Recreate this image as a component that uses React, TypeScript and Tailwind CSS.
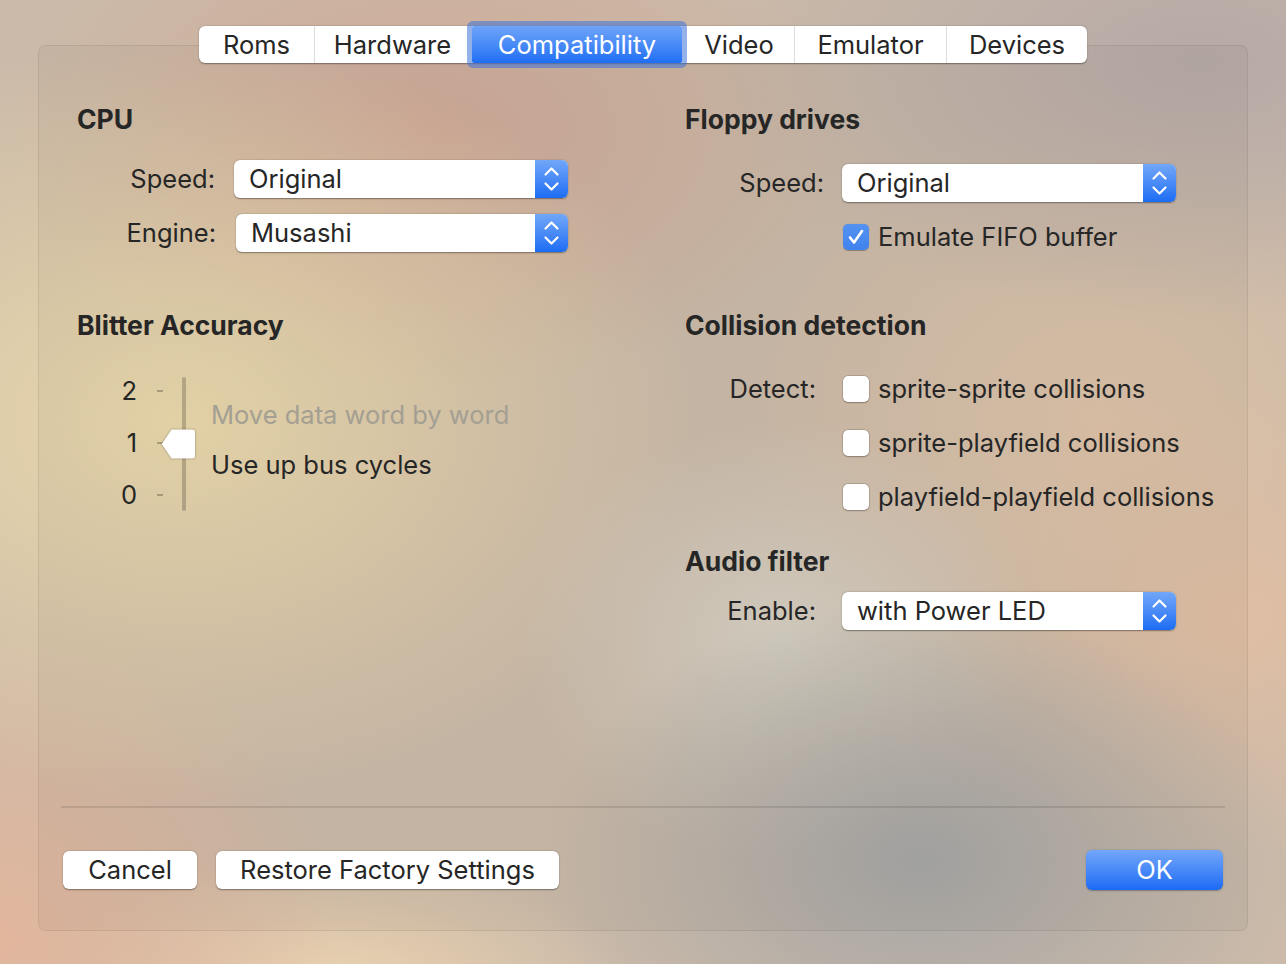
import React from "react";

interface Tab {
  label: string;
  width: string;
  selected?: boolean;
}

const tabs: Tab[] = [
  { label: "Roms", width: "w-[115px]" },
  { label: "Hardware", width: "w-[156px]" },
  { label: "Compatibility", width: "w-[210px]", selected: true },
  { label: "Video", width: "w-[110px]" },
  { label: "Emulator", width: "w-[152px]" },
  { label: "Devices", width: "w-[141px]" },
];

const UpDown = () => (
  <svg width="33" height="38" viewBox="0 0 33 38" fill="none">
    <path d="M10.5 14.5 L16.5 8.5 L22.5 14.5" stroke="white" strokeWidth="2.2" strokeLinecap="round" strokeLinejoin="round" />
    <path d="M10.5 23.5 L16.5 29.5 L22.5 23.5" stroke="white" strokeWidth="2.2" strokeLinecap="round" strokeLinejoin="round" />
  </svg>
);

const PopUp = ({ value, width }: { value: string; width: string }) => (
  <div className={`flex h-[38px] ${width} rounded-[6px] bg-white shadow-[0_0.5px_1.5px_rgba(0,0,0,0.4)]`}>
    <span className="flex-1 pl-[15px] leading-[38px]">{value}</span>
    <span className="flex w-[33px] items-center justify-center rounded-r-[6px] bg-gradient-to-b from-[#72a7f8] to-[#1a6cf4]">
      <UpDown />
    </span>
  </div>
);

const CheckBox = ({ checked, label }: { checked?: boolean; label: string }) => (
  <div className="flex h-[30px] items-center gap-[9px]">
    {checked ? (
      <span className="flex h-[26px] w-[26px] items-center justify-center rounded-[5px] bg-gradient-to-b from-[#5593f2] to-[#3f82ee] shadow-[0_0.5px_1px_rgba(0,0,0,0.3)]">
        <svg width="26" height="26" viewBox="0 0 26 26" fill="none">
          <path d="M7 13.5 L11 18.5 L19 7" stroke="white" strokeWidth="2.6" strokeLinecap="round" strokeLinejoin="round" />
        </svg>
      </span>
    ) : (
      <span className="h-[26px] w-[26px] rounded-[5px] bg-white shadow-[0_0_0_0.5px_rgba(0,0,0,0.2),0_0.5px_1.5px_rgba(0,0,0,0.25)]" />
    )}
    <span>{label}</span>
  </div>
);

const Heading = ({ children, className = "" }: { children: React.ReactNode; className?: string }) => (
  <h2 className={`h-[30px] text-[26.5px] leading-[30px] font-bold ${className}`}>{children}</h2>
);

const Button = ({ label, width }: { label: string; width: string }) => (
  <button className={`h-[38px] ${width} rounded-[6px] bg-white text-[#262626] shadow-[0_0.5px_1.5px_rgba(0,0,0,0.4)]`}>
    {label}
  </button>
);

// vertical three-step slider for blitter accuracy
const BlitterSlider = () => (
  <div className="mt-[37px] flex h-[134px]">
    <div className="flex w-[86px] flex-col gap-[26px] pt-[1px]">
      {["2", "1", "0"].map((n) => (
        <div key={n} className="flex h-[26px] items-center">
          <span className="w-[60px] text-right">{n}</span>
          <span className="ml-[20px] h-[1.5px] w-[6px] bg-black/25" />
        </div>
      ))}
    </div>
    <div className="relative ml-[19px] h-[134px] w-[4px] rounded-full bg-black/20">
      <svg
        className="absolute top-[52px] -left-[21px] drop-shadow-[0_0.5px_1px_rgba(0,0,0,0.35)]"
        width="35"
        height="31"
        viewBox="0 0 35 31"
      >
        <path d="M0.8 15 L10 1.2 Q10.6 0.5 11.5 0.5 H31 Q34 0.5 34 3.5 V26.5 Q34 29.5 31 29.5 H11.5 Q10.6 29.5 10 28.8 Z" fill="white" />
      </svg>
    </div>
    <div className="ml-[25px] flex flex-col pt-[23px]">
      <div className="h-[30px] text-[#a49f93]">Move data word by word</div>
      <div className="mt-[20px] h-[30px]">Use up bus cycles</div>
    </div>
  </div>
);

export default function App() {
  return (
    <div className="flex h-[964px] w-[1286px] flex-col items-center bg-[#cbbaa9] bg-[radial-gradient(ellipse_380px_260px_at_920px_860px,#a6a6a5,transparent),radial-gradient(ellipse_300px_240px_at_1240px_620px,#dfbea4,transparent),radial-gradient(ellipse_260px_220px_at_780px_640px,#d6d0c2,transparent),radial-gradient(ellipse_520px_380px_at_180px_420px,#ead8ab,transparent),radial-gradient(ellipse_340px_320px_at_0px_940px,#e2b69d,transparent),radial-gradient(ellipse_300px_140px_at_330px_990px,#ecd3b0,transparent),radial-gradient(ellipse_420px_260px_at_430px_130px,#cfa997,transparent),radial-gradient(ellipse_500px_260px_at_1200px_60px,#b6aaa7,transparent),radial-gradient(ellipse_360px_300px_at_1100px_420px,#dcc2a8,transparent)] pt-[26px] font-['Inter','Liberation_Sans',sans-serif] text-[25.5px] leading-[30px] text-[#262626]">
      {/* segmented tab selector */}
      <div className="relative z-10 flex h-[37px] rounded-[6px] bg-white shadow-[0_0.5px_1.5px_rgba(0,0,0,0.4)]">
        {tabs.map((tab, i) => (
          <div
            key={tab.label}
            className={`flex h-[37px] ${tab.width} items-center justify-center ${
              tab.selected
                ? "mx-[2px] rounded-[2px] bg-gradient-to-b from-[#6ea4f8] to-[#1e6ef4] text-white shadow-[0_0_0_5px_rgba(60,115,215,0.55)]"
                : i > 0 && !tabs[i - 1].selected
                  ? "border-l border-[#dcdcdc]"
                  : ""
            }`}
          >
            {tab.label}
          </div>
        ))}
      </div>

      <div className="-mt-[18px] flex h-[886px] w-[1210px] flex-col rounded-[8px] border border-black/[0.07] bg-black/[0.03]">
        <div className="grid grid-cols-[608px_1fr] pt-[58px] pl-[38px]">
          <div className="flex flex-col">
            <Heading>CPU</Heading>
            <div className="mt-[26px] flex items-center">
              <div className="w-[138px] text-right">Speed:</div>
              <div className="ml-[19px]">
                <PopUp value="Original" width="w-[334px]" />
              </div>
            </div>
            <div className="mt-[16px] flex items-center">
              <div className="w-[139px] text-right">Engine:</div>
              <div className="ml-[20px]">
                <PopUp value="Musashi" width="w-[332px]" />
              </div>
            </div>
            <Heading className="mt-[58px]">Blitter Accuracy</Heading>
            <BlitterSlider />
          </div>

          <div className="flex flex-col">
            <Heading>Floppy drives</Heading>
            <div className="mt-[30px] flex items-center">
              <div className="w-[139px] text-right">Speed:</div>
              <div className="ml-[18px]">
                <PopUp value="Original" width="w-[334px]" />
              </div>
            </div>
            <div className="mt-[20px] pl-[158px]">
              <CheckBox checked label="Emulate FIFO buffer" />
            </div>

            <Heading className="mt-[58px]">Collision detection</Heading>
            <div className="mt-[34px] flex h-[30px] items-center">
              <div className="w-[131px] text-right">Detect:</div>
              <div className="ml-[27px]">
                <CheckBox label="sprite-sprite collisions" />
              </div>
            </div>
            <div className="mt-[24px] pl-[158px]">
              <CheckBox label="sprite-playfield collisions" />
            </div>
            <div className="mt-[24px] pl-[158px]">
              <CheckBox label="playfield-playfield collisions" />
            </div>

            <Heading className="mt-[34px]">Audio filter</Heading>
            <div className="mt-[16px] flex items-center">
              <div className="w-[131px] text-right">Enable:</div>
              <div className="ml-[26px]">
                <PopUp value="with Power LED" width="w-[334px]" />
              </div>
            </div>
          </div>
        </div>

        <div className="mx-[22px] mt-auto h-[2px] bg-black/10" />
        <div className="mt-[42px] mb-[40px] flex items-center px-[24px]">
          <Button label="Cancel" width="w-[134px]" />
          <div className="ml-[19px]">
            <Button label="Restore Factory Settings" width="w-[343px]" />
          </div>
          <button className="ml-auto h-[40px] w-[137px] rounded-[6px] bg-gradient-to-b from-[#72a6f8] to-[#1a6af5] text-white shadow-[0_0.5px_1.5px_rgba(0,0,0,0.3)]">
            OK
          </button>
        </div>
      </div>
    </div>
  );
}
